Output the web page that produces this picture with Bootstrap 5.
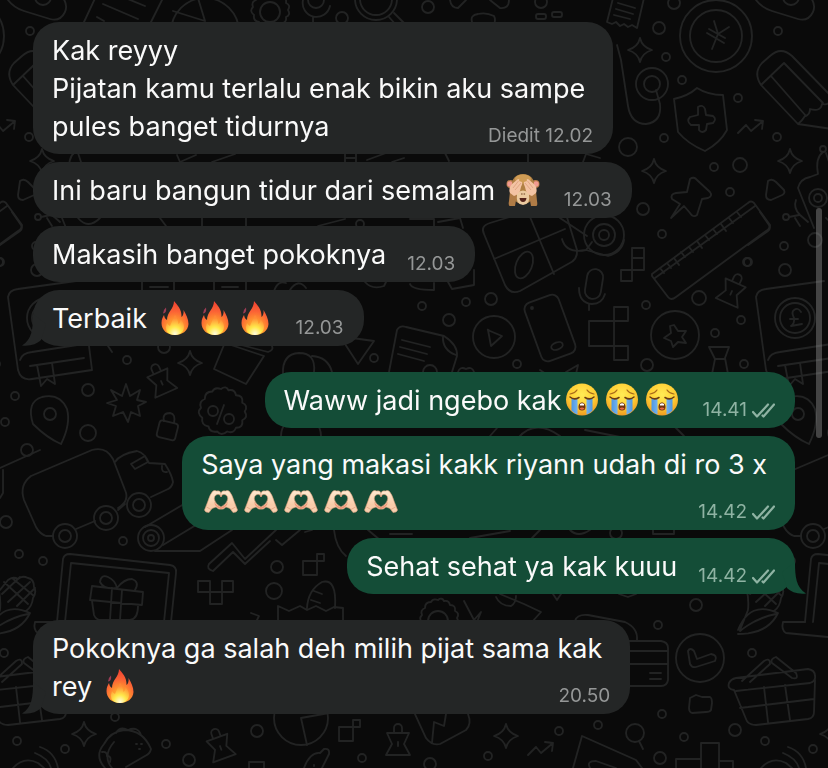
<!DOCTYPE html>
<html lang="id" data-bs-theme="dark">
<head>
<meta charset="utf-8">
<meta name="viewport" content="width=device-width, initial-scale=1">
<title>Obrolan</title>
<link href="https://cdn.jsdelivr.net/npm/bootstrap@5.3.0/dist/css/bootstrap.min.css" rel="stylesheet">
<style>
  body { background: #0a0a0a; font-family: Inter, "Noto Sans", sans-serif; }
  .wallpaper { z-index: -1; pointer-events: none; }
  .chat { padding: 22px 33px 54px; }
  .bubble { padding: 10px 20px 8px 19px; border-radius: 26px; font-size: 27px; line-height: 38px; color: #fafafa; max-width: 100%; }
  .bubble-in { background: #242626; --tail: #242626; --meta: #959797; }
  .bubble-out { background: #144d37; --tail: #144d37; --meta: #8fb3a3; }
  .new-group { margin-top: 18px; }
  .line-full { padding-right: 8px; }
  .last-line { column-gap: 21px; }
  .meta { font-size: 19px; line-height: 20px; color: var(--meta); }
  .ticks { width: 23px; height: 15px; margin-left: 5px; }
  .emo { width: 34px; height: 34px; margin: 0 3px; vertical-align: -7px; }
  .tail { width: 24px; height: 32px; fill: var(--tail); bottom: 0; }
  .tail-in { left: -11px; }
  .tail-out { right: -11px; transform: scaleX(-1); }
  .scroll-thumb { top: 208px; right: 6px; width: 6px; height: 230px; background: rgba(150,150,150,.42); }
</style>
<script src="https://cdn.jsdelivr.net/npm/bootstrap@5.3.0/dist/js/bootstrap.bundle.min.js"></script>
</head>
<body class="min-vh-100 position-relative">

<svg class="wallpaper position-fixed top-0 start-0 w-100 h-100" aria-hidden="true">
  <defs>
    <path id="spark" d="M0-12Q2-3 12 0Q2 3 0 12Q-2 3-12 0Q-2-3 0-12Z"/>
    <path id="trend" d="M-13 6L-5-2L0 4L12-6M4-7L12-6L11 2"/>
    <g id="clip"><path d="M-4-10V-14A4 4 0 0 1 4-14V-10M-11-9L11-9L6 2L12 13L-12 13L-6 2ZM0 0V4"/></g>
    <path id="cog" d="M0-20q4-3 6 1q5-1 6 4q6 0 5 6q5 2 2 7q3 5-2 7q1 6-5 6q-2 5-7 3q-5 4-8 0q-6 1-7-4q-6-1-5-7q-5-4-1-8q-2-5 3-7q0-6 6-6q2-4 7-2Z"/>
    <g id="doodles" fill="none" stroke="#222323" stroke-width="1.8" stroke-linejoin="round" stroke-linecap="round">
      <!-- top strip -->
      <path d="M8 0Q14 8 24 11L50 19Q60 22 65 12Q68 5 63-2"/><circle cx="43" cy="-3" r="8"/>
      <path d="M98-8L84 22M164-4L150 24M103 4L138 19M118-5L145 6M97 17L104 21"/>
      <circle cx="205" cy="32" r="34"/><path d="M173 11L205 21L198-2"/>
      <use href="#cog" x="269" y="12"/><circle cx="270" cy="12" r="10"/>
      <path d="M303 0A13 13 0 1 0 330 6M308 0A8 8 0 0 0 324 0M313 17V24"/>
      <circle cx="342" cy="18" r="6"/><circle cx="376" cy="-1" r="21"/><circle cx="376" cy="-1" r="16"/><path d="M389 17L396 25M394 13L404 23"/>
      <circle cx="428" cy="7" r="6"/><path d="M450 0Q451 8 458 8L466 0M490 0L500 8Q509 9 509 0M472 22Q470 15 478 14Q486 12 494 16Q496 20 494 24"/>
      <circle cx="541" cy="2" r="6"/><rect x="536" y="14" width="10" height="5" rx="2"/><rect x="552" y="12" width="10" height="5" rx="2"/>
      <path d="M613-2L607 22L612 24L616 22L620 26L624 24L628 27L632 25L637 28L644-2M618 3L635 8M616 9L633 14M614 15L630 19"/>
      <circle cx="674" cy="3" r="6"/><circle cx="659" cy="28" r="6"/><use href="#spark" x="640" y="50"/><circle cx="666" cy="57" r="4"/>
      <circle cx="716" cy="36" r="36"/><circle cx="716" cy="36" r="26"/><path d="M714 21L718 34L729 27M718 34L712 49M707 33L724 43M709 29L725 38"/>
      <circle cx="652" cy="84" r="16"/><circle cx="652" cy="84" r="8"/><path d="M617 45L621 60L628 106Q631 124 646 124Q662 122 660 104L656 90"/>
      <circle cx="682" cy="80" r="4"/><circle cx="738" cy="98" r="4"/>
      <path d="M697 88Q688 96 674 99L678 132Q688 144 705 151Q720 143 727 130L723 95Q708 95 697 88Z"/>
      <path d="M698 107Q703 104 705 109L706 115L713 116Q717 119 713 123L707 124L706 130Q702 134 699 130L699 125L691 125Q686 121 690 117L698 115Z"/>
      <use href="#trend" x="751" y="127"/><circle cx="664" cy="138" r="4"/><circle cx="628" cy="147" r="9"/>
      <use href="#spark" x="654" y="171"/><circle cx="714" cy="167" r="4"/><circle cx="740" cy="165" r="7"/><circle cx="730" cy="192" r="4"/>
      <circle cx="30" cy="31" r="4"/>
      <path d="M13 85Q5 73 14 63L22 56Q33 46 44 56L84 97M13 85L50 124L84 129M13 85L36 63M23 76L58 116M36 63L75 103M50 124Q54 121 57 116Q62 115 62 109Q73 112 74 104Q82 106 84 97"/>
      <circle cx="29" cy="137" r="4"/><use href="#spark" x="42" y="161"/><circle cx="75" cy="149" r="3"/>
      <path d="M20 181Q24 178 28 182L36 190Q38 194 32 196L23 200Q18 200 18 195Z"/>
      <circle cx="38" cy="217" r="3"/><path d="M75 152Q67 158 70 174L62 177Q52 179 50 188L66 228M48 200Q45 208 52 215L60 222M41 217L51 215"/><circle cx="70" cy="198" r="9"/><circle cx="70" cy="198" r="4"/><circle cx="67" cy="240" r="7"/><circle cx="36" cy="246" r="4"/>
      <!-- gaps between the upper bubbles -->
      <path d="M78 153L81 162M177 155L180 162L196 155M212 162L235 154M345 152V163M356 152V163M345 158H356M367 160L386 153M392 162L404 158M528 150V166M583 162L586 154L600 158M445 153L449 161"/>
      <path d="M47 218L52 226M78 218Q88 230 100 218M160 218L166 226M202 218V227H246V218M318 226L345 219M410 219H434V226M438 222L460 218L463 228"/><circle cx="360" cy="224" r="4"/>
      <path d="M142 282V291H174V282M150 287H168M214 282V291H246V282M222 287H238M274 291Q278 280 286 283M290 290Q298 278 306 288M365 282Q372 290 384 286L386 282M410 284Q412 290 434 290V283M448 282L452 289L474 285V270"/>
      <!-- pin, ruler, box and tape on the right -->
      <path d="M690 179Q694 176 697 180L710 192Q713 196 708 198L702 199L697 215Q693 218 690 213L684 206L671 218L680 204L672 199Q670 194 676 193L687 192Z"/><circle cx="643" cy="209" r="6"/>
      <path d="M652 274L748 203Q751 200 754 203L770 225Q770 229 766 231L676 297Q671 301 668 297L652 276ZM655 278L755 206M660 268l4 5M667 263l4 5M674 258l5 7M681 252l4 5M689 247l4 5M697 241l5 7M705 235l4 5M713 229l4 5M721 224l5 7M729 218l4 5M737 212l4 5"/>
      <path d="M484 234Q480 226 490 223L562 201L577 250Q578 260 568 264L520 291Q510 295 505 285ZM494 259L565 229M530 217L554 274"/><ellipse cx="524" cy="265" rx="8" ry="14" transform="rotate(22 524 265)"/>
      <circle cx="604" cy="235" r="20"/><circle cx="604" cy="235" r="11"/><circle cx="604" cy="235" r="5"/><path d="M560 218L587 236M586 250L608 256Q622 252 624 240M562 239Q566 254 586 250L592 242"/>
      <circle cx="662" cy="234" r="4"/><circle cx="747" cy="262" r="4"/>
      <path d="M632 248H644V270H621V281H632V270M632 258H644M632 248V270"/>
      <rect x="586" y="269" width="16" height="30" rx="8" transform="rotate(9 594 284)"/><path d="M579 288Q579 303 592 304Q602 304 605 294M589 304V310"/>
      <circle cx="491" cy="299" r="6"/><circle cx="466" cy="302" r="4"/><circle cx="422" cy="306" r="4"/><circle cx="449" cy="320" r="6"/>
      <circle cx="494" cy="337" r="21"/><path d="M488 330Q487 329 490 331L502 336L491 346Z"/>
      <rect x="532" y="297" width="36" height="62" rx="7" transform="rotate(-20 550 328)"/><circle cx="532" cy="308" r="1"/><ellipse cx="557" cy="346" rx="6" ry="3.500" transform="rotate(-20 557 346)"/>
      <path d="M614 307H628V321H614ZM589 321H614V346H589ZM614 346H628V360H614ZM614 321V346"/>
      <circle cx="646" cy="305" r="4"/><circle cx="699" cy="298" r="7"/><circle cx="715" cy="333" r="4"/><circle cx="741" cy="320" r="4"/><circle cx="744" cy="364" r="4"/>
      <circle cx="675" cy="335" r="24"/><path d="M674 325L678 331L686 331L682 337L686 343L678 342L673 347L671 341L664 338L671 333L670 326Z"/>
      <use href="#clip" transform="translate(732 291) rotate(24)"/><circle cx="647" cy="365" r="6"/><circle cx="517" cy="364" r="4"/>
      <path d="M709 347H729L725 358L728 374M709 347L715 359L712 374M715 359H725"/>
      <!-- book and stickers on the left -->
      <path d="M8 297Q9 290 18 289L76 281M8 297L18 370Q21 381 32 379L92 370L89 346M20 360Q22 353 32 352L90 343M30 366L84 358M37 365L41 386L47 379L55 384L52 363"/>
      <circle cx="47" cy="318" r="20"/><circle cx="47" cy="318" r="15"/><path d="M53 312Q50 307 46 310Q43 312 46 318Q47 323 43 326L54 324M42 319H50"/>
      <circle cx="37" cy="270" r="6"/><circle cx="0" cy="262" r="4"/><path d="M0 245L20 231Q23 229 21 225L12 212"/>
      <path d="M108 346L112 352"/><circle cx="164" cy="347" r="6"/><circle cx="127" cy="360" r="4"/><use href="#spark" x="190" y="363"/>
      <path d="M226 340L214 369L246 384L264 356L216 340M222 340L268 352Q274 350 272 346"/><path d="M345 344L358 364L374 341L352 338"/><circle cx="374" cy="358" r="4"/>
      <path d="M283 374Q282 354 299 353Q316 353 314 372M312 356Q328 357 332 372"/>
      <path d="M389 372L397 330Q400 325 406 327L444 336Q458 345 457 356L452 372M443 336Q442 350 456 355M402 340L430 347M400 347L427 354M398 354L424 361"/><circle cx="430" cy="372" r="7"/>
      <path d="M458 372Q460 366 466 369Q472 366 474 372M540 370L546 374M566 372L578 365L576 374"/>
      <use href="#clip" transform="translate(161 381) rotate(-24)"/>
      <path d="M126 384L130 396L140 390L137 400L146 402L138 406L140 416L131 412L128 422L123 412L113 416L116 406L107 403L117 400L111 390L122 396Z"/>
      <circle cx="88" cy="390" r="6"/><circle cx="15" cy="396" r="4"/><circle cx="5" cy="422" r="4"/><circle cx="50" cy="414" r="6"/><circle cx="88" cy="433" r="8"/><circle cx="27" cy="450" r="6"/>
      <path d="M33 424Q26 402 42 397Q60 393 67 409Q71 424 61 444Q47 438 33 424Z"/>
      <rect x="158" y="422" width="19" height="17" rx="3" transform="rotate(14 168 430)"/><path d="M164 421Q162 413 170 413Q176 414 174 423"/>
      <use href="#cog" transform="translate(221 414) scale(1.250)" stroke-width="1.500"/><circle cx="213" cy="411" r="5"/><circle cx="229" cy="419" r="5"/><path d="M224 405L217 424"/>
      <circle cx="301" cy="436" r="20"/><path d="M490 436L497 428M518 438Q535 418 560 436M585 430L620 437M674 426L684 436"/>
      <!-- van and roll -->
      <path d="M53 536L46 536Q40 534 36 527L24 500Q19 485 31 476L92 450Q106 446 113 459L125 490Q130 501 118 508M76 529L95 521M118 510L125 504M115 462Q120 454 137 451Q145 453 149 463L165 464Q172 475 173 482Q172 488 166 490L151 497M131 464L145 456L148 462L135 469ZM162 466Q161 473 167 472"/>
      <circle cx="65" cy="536" r="12"/><circle cx="65" cy="536" r="6"/><circle cx="106" cy="518" r="12"/><circle cx="106" cy="518" r="6"/><circle cx="139" cy="505" r="12"/><circle cx="139" cy="505" r="6"/>
      <circle cx="151" cy="538" r="13"/><circle cx="151" cy="538" r="8"/><circle cx="151" cy="538" r="3"/><path d="M145 527L184 504M155 551H200L232 530M163 545L196 525"/>
      <circle cx="6" cy="522" r="6"/><circle cx="123" cy="541" r="4"/><circle cx="19" cy="554" r="4"/><circle cx="43" cy="561" r="4"/><path d="M0 468L40 450M0 498L3 493V470"/>
      <path d="M209 564L232 543L245 559L276 530M213 571L233 552L245 564L270 541M209 564Q206 569 213 571M276 540L282 545L300 530M305 532L312 530M334 530Q336 548 346 556M368 530L380 540M390 534H412M470 538L510 531M532 538L540 530M570 530Q578 538 590 530M653 530V534H674V530"/>
      <circle cx="616" cy="533" r="6"/><circle cx="277" cy="567" r="6"/><circle cx="274" cy="591" r="8"/>
      <!-- monitor with gift -->
      <path d="M57 622L63 559Q64 554 70 554L170 565Q177 566 176 573L171 622M65 622L71 563L169 573L164 622"/>
      <path d="M92 586L143 592L142 605L90 600ZM92 601L94 615Q96 620 101 620L130 620Q138 619 138 606M112 588L110 620M122 590L120 620M117 588Q104 590 100 582Q101 574 108 577Q115 580 117 588Q124 579 132 579Q140 582 135 590"/>
      <path d="M198 581H210V592H222V581H233V592H222V604H210V592H198ZM303 561H317V575H303ZM317 554H324V561H317Z"/>
      <path d="M278 622V606L289 611L300 606L307 610L316 606L326 611L334 607L343 608V622M307 608Q308 590 322 582Q337 578 335 608M314 591L322 594M311 600L320 603M251 613L259 616L256 622"/>
      <!-- corn -->
      <path d="M0 590L8 580Q13 576 18 579Q22 575 28 578Q34 579 34 587Q37 592 33 598Q32 607 26 611M4 582L28 604M12 578L34 596M2 594L20 577M8 602L30 582M17 606L35 588M-8 576Q2 590 0 610L-8 630M-10 630Q2 600 30 613Q20 634-10 634M-8 631Q8 618 28 614"/>
      <!-- lower right items -->
      <circle cx="696" cy="605" r="6"/><circle cx="658" cy="625" r="4"/><circle cx="4" cy="653" r="4"/>
      <use href="#cog" x="438" y="620"/><circle cx="438" cy="621" r="10"/>
      <path d="M464 601L474 620L481 612L477 622M500 594L524 604L541 612L532 622M496 597Q500 606 511 606Q516 603 516 596M553 594L557 600L561 594M575 621Q577 614 588 615L625 622Q638 628 637 640M619 594L628 597L636 594"/>
      <path d="M620 641H661Q668 642 668 648V680Q667 686 661 686H630M630 651H668M630 664H668M650 673H661M650 679H661"/>
      <circle cx="700" cy="658" r="24"/><path d="M688 651Q690 647 694 651L697 659L711 654Q718 655 715 661L696 667Q692 668 690 664Z"/>
      <path d="M690 698L696 695L702 697L710 697Q712 698 712 703L711 710Q710 712 706 712L692 713Q689 712 689 708Z"/><circle cx="662" cy="714" r="4"/>
      <path d="M57 622L35 622Q33 630 38 633L90 638"/>
      <!-- basket -->
      <path d="M-14 690Q-21 689-19 683Q-17 679-12 678L60 669Q67 670 67 676Q68 681 62 683L-12 691M-14 690L-2 719Q0 725 8 725L60 719Q66 718 66 712L67 680M-8 708L66 699M16 687L20 722M37 685L42 720M-6 681L16 661Q22 657 22 664L2 682M28 657Q22 659 24 663L44 678Q51 680 48 673Z"/>
      <circle cx="115" cy="717" r="4"/><use href="#spark" x="84" y="734"/><circle cx="17" cy="741" r="4"/><circle cx="65" cy="749" r="4"/>
      <path d="M13 768Q24 756 38 763L44 768M35 753Q48 758 51 768M40 747Q55 752 58 768"/>
      <path d="M105 768Q94 756 104 744Q110 732 124 730Q143 730 151 749Q150 754 145 756L126 767M112 768Q102 756 114 742M116 733Q120 726 128 730Q138 726 141 735"/><path d="M102 752q5-1 5 4q5 0 3 6M136 744h1M141 744h1M139 749h1"/>
      <circle cx="166" cy="744" r="4"/><circle cx="189" cy="760" r="6"/><use href="#clip" transform="translate(220 746) rotate(-20)"/>
      <circle cx="257" cy="731" r="6"/><circle cx="301" cy="718" r="27"/><path d="M301 718L329 713M301 718L307 745M249 768V762H264V768"/>
      <path d="M339 727H353V741H339ZM353 720H360V727H353ZM304 768Q310 752 320 753L324 749Q330 748 329 754L322 768M314 765v1"/><circle cx="362" cy="758" r="4"/><use href="#clip" x="398" y="742"/>
      <path d="M415 714L426 738Q432 746 440 744L466 730Q472 724 468 714M432 743L434 722L444 726L446 714"/>
      <use href="#spark" x="506" y="736"/><circle cx="488" cy="756" r="4"/><circle cx="430" cy="764" r="6"/><use href="#trend" x="541" y="749"/><circle cx="559" cy="731" r="4"/><circle cx="598" cy="725" r="4"/>
      <path d="M573 768L582 736L636 760L642 768M590 768Q586 761 596 761L616 768"/><circle cx="635" cy="733" r="9"/><path d="M639 741L643 749"/><circle cx="660" cy="758" r="6"/><circle cx="684" cy="737" r="4"/><circle cx="735" cy="730" r="6"/>
      <path d="M676 768V759H701V743H719V761H733V768M701 759V768M719 761V768"/>
    </g>
    <pattern id="tile" width="748" height="768" patternUnits="userSpaceOnUse">
      <use href="#doodles"/><use href="#doodles" x="748"/><use href="#doodles" x="-748"/>
    </pattern>

    <radialGradient id="fireOuter" cx=".5" cy=".88" r=".88"><stop offset="0" stop-color="#ffc642"/><stop offset=".35" stop-color="#ff9a2e"/><stop offset=".65" stop-color="#fb6335"/><stop offset="1" stop-color="#ee3f32"/></radialGradient>
    <radialGradient id="fireInner" cx=".5" cy=".95" r=".8"><stop offset="0" stop-color="#fffce0"/><stop offset=".45" stop-color="#ffe84a"/><stop offset="1" stop-color="#ff8a36"/></radialGradient>
    <symbol id="fire" viewBox="0 0 34 34">
      <path d="M16 0C19 4 24 8 23.500 16C25 15 26 12 25.500 9C28 13 30.500 18 30.500 23C30 30 24 34 17 34C9 34 3.500 29 3.500 22C3.500 18 5 16 6 14C6.500 16 7 18 9 19C9 11 16 8 16 0Z" fill="url(#fireOuter)"/>
      <path d="M17 14C20 18 20 21 20.500 23C22 22 22.500 20 22.500 18C26 22 27 26 25 30Q22 34 17 34Q11 34 8.500 30Q7 26 9 22Q10 24 12 25Q14 20 17 14Z" fill="url(#fireInner)"/>
      <path d="M8 6.500Q5 9 5 12.500Q9 12 8 6.500Z" fill="#9c3c55"/>
    </symbol>

    <radialGradient id="face" cx=".5" cy=".35" r=".65"><stop offset="0" stop-color="#ffec55"/><stop offset=".6" stop-color="#ffcf35"/><stop offset="1" stop-color="#ee9a22"/></radialGradient>
    <linearGradient id="tears"><stop offset="0" stop-color="#4f97e2"/><stop offset=".5" stop-color="#8ec8f8"/><stop offset="1" stop-color="#4f97e2"/></linearGradient>
    <symbol id="sob" viewBox="0 0 34 34">
      <circle cx="17" cy="16.500" r="16" fill="url(#face)"/>
      <path d="M6.500 15H12.500V31.500Q8.500 30 6.500 27.500ZM21.500 15H27.500V27.500Q25.500 30 21.500 31.500Z" fill="url(#tears)"/>
      <path d="M5 14Q9 17.500 14 14.500M20 14.500Q25 17.500 29 14" fill="none" stroke="#6b3b10" stroke-width="1.500" stroke-linecap="round"/>
      <path d="M5 11Q9.500 10.500 12 7M22 7Q24.500 10.500 29 11" fill="none" stroke="#a8691a" stroke-width="1.200" stroke-linecap="round"/>
      <path d="M17 19.500C19.500 19.500 20.500 22 20.500 24Q20.500 27.500 17 27.500Q13.500 27.500 13.500 24C13.500 22 14.500 19.500 17 19.500Z" fill="#6f3410"/>
      <path d="M15 21Q17 19.500 19 21V22.500H15Z" fill="#fff"/><path d="M14.500 25.500Q17 23.500 19.500 25.500Q17 28 14.500 25.500Z" fill="#e86a46"/>
    </symbol>

    <symbol id="monkey" viewBox="0 0 34 34">
      <circle cx="4.500" cy="11" r="4" fill="#b77c4a"/><circle cx="29.500" cy="11" r="4" fill="#b77c4a"/><circle cx="4" cy="11" r="2.700" fill="#f19b91"/><circle cx="30" cy="11" r="2.700" fill="#f19b91"/>
      <path d="M17 1C24 1 29 6 28 14L26 25Q24 31 17 31Q10 31 8 25L6 14C5 6 10 1 17 1Z" fill="#b08044"/>
      <ellipse cx="17" cy="6" rx="8" ry="4.500" fill="#cf9c55"/>
      <path d="M11 20Q17 15 23 20Q25 31 17 32Q9 31 11 20Z" fill="#ebcaa0"/>
      <path d="M4 18L11 22L9 33H4Q2 33 3 28ZM30 18L23 22L25 33H30Q32 33 31 28Z" fill="#b07c46"/>
      <path d="M4 20Q2 15 6 11L12 6Q14 6 13 8L16 9Q17 11 15 14L14 18Q12 22 8 23ZM30 20Q32 15 28 11L22 6Q20 6 21 8L18 9Q17 11 19 14L20 18Q22 22 26 23Z" fill="#f3c3a3"/>
      <path d="M7 15L12.500 8M9 17L15 10M27 15L21.500 8M25 17L19 10" stroke="#d99877" stroke-width=".7" fill="none"/>
      <path d="M15.500 21H16.200M18 21H18.700" stroke="#6c4020" stroke-linecap="round"/><path d="M13.500 25H20.500Q20 29 17 29Q14 29 13.500 25Z" fill="#54231a"/>
    </symbol>

    <linearGradient id="skin" x2="0" y2="1"><stop offset="0" stop-color="#ffead0"/><stop offset=".65" stop-color="#f8cba8"/><stop offset="1" stop-color="#f7d1b2"/></linearGradient>
    <symbol id="hands" viewBox="0 0 34 34">
      <g id="hand"><path d="M.500 25L4 16Q6 9 9 6Q11 5 12.500 6Q16 5 17 8V12Q16 8.500 13 9.500Q9.500 11 10.500 15Q11.500 19 17 22V24Q15 25 12 22L8 23.500L5 27.500Q1 27.500 .500 25Z" fill="url(#skin)" stroke="#d99c79" stroke-width=".6"/><path d="M10 16Q11.500 20 17 22.500V24Q13 23 11 20Z" fill="#ee9376"/><path d="M2.500 22L7 24.500" stroke="#e0a17f" stroke-width=".8"/></g>
      <use href="#hand" transform="translate(34 0) scale(-1 1)"/>
    </symbol>
    <symbol id="readTicks" viewBox="0 0 23 15"><path d="M1 9L5 13.500L16 1.500M10.500 12.500L11.500 13.500L22 1.500" fill="none" stroke="#8fb3a3" stroke-width="2.200" stroke-linecap="round" stroke-linejoin="round"/></symbol>
    <symbol id="tailShape" viewBox="0 0 24 32"><path d="M11 0C11 15 10 25 0 31.500C8 32.500 15 30 19 26L24 10Z"/></symbol>
  </defs>
  <rect width="100%" height="100%" fill="url(#tile)"/>
</svg>

<main class="chat d-flex flex-column align-items-start gap-2">
  <article class="bubble bubble-in">
    <div class="line-full">Kak reyyy<br>Pijatan kamu terlalu enak bikin aku sampe</div>
    <div class="last-line d-flex justify-content-between align-items-end"><span>pules banget tidurnya</span><small class="meta">Diedit <time>12.02</time></small></div>
  </article>

  <article class="bubble bubble-in last-line d-flex align-items-end">
    <span>Ini baru bangun tidur dari semalam <svg class="emo" role="img" aria-label="🙈"><use href="#monkey"/></svg></span><time class="meta">12.03</time>
  </article>

  <article class="bubble bubble-in last-line d-flex align-items-end">
    <span>Makasih banget pokoknya</span><time class="meta">12.03</time>
  </article>

  <article class="bubble bubble-in last-line d-flex align-items-end position-relative">
    <svg class="tail tail-in position-absolute" aria-hidden="true"><use href="#tailShape"/></svg>
    <span>Terbaik <svg class="emo" role="img" aria-label="🔥"><use href="#fire"/></svg><svg class="emo" role="img" aria-label="🔥"><use href="#fire"/></svg><svg class="emo" role="img" aria-label="🔥"><use href="#fire"/></svg></span><time class="meta">12.03</time>
  </article>

  <article class="bubble bubble-out new-group align-self-end last-line d-flex align-items-end">
    <span>Waww jadi ngebo kak<svg class="emo" role="img" aria-label="😭"><use href="#sob"/></svg><svg class="emo" role="img" aria-label="😭"><use href="#sob"/></svg><svg class="emo" role="img" aria-label="😭"><use href="#sob"/></svg></span>
    <span class="meta d-flex align-items-center"><time>14.41</time><svg class="ticks" role="img" aria-label="Dibaca"><use href="#readTicks"/></svg></span>
  </article>

  <article class="bubble bubble-out align-self-end">
    <div class="line-full">Saya yang makasi kakk riyann udah di ro 3 x</div>
    <div class="last-line d-flex justify-content-between align-items-end">
      <span><svg class="emo" role="img" aria-label="🫶🏻"><use href="#hands"/></svg><svg class="emo" role="img" aria-label="🫶🏻"><use href="#hands"/></svg><svg class="emo" role="img" aria-label="🫶🏻"><use href="#hands"/></svg><svg class="emo" role="img" aria-label="🫶🏻"><use href="#hands"/></svg><svg class="emo" role="img" aria-label="🫶🏻"><use href="#hands"/></svg></span>
      <span class="meta d-flex align-items-center"><time>14.42</time><svg class="ticks" role="img" aria-label="Dibaca"><use href="#readTicks"/></svg></span>
    </div>
  </article>

  <article class="bubble bubble-out align-self-end last-line d-flex align-items-end position-relative">
    <svg class="tail tail-out position-absolute" aria-hidden="true"><use href="#tailShape"/></svg>
    <span>Sehat sehat ya kak kuuu</span>
    <span class="meta d-flex align-items-center"><time>14.42</time><svg class="ticks" role="img" aria-label="Dibaca"><use href="#readTicks"/></svg></span>
  </article>

  <article class="bubble bubble-in new-group position-relative">
    <svg class="tail tail-in position-absolute" aria-hidden="true"><use href="#tailShape"/></svg>
    <div class="line-full">Pokoknya ga salah deh milih pijat sama kak</div>
    <div class="last-line d-flex justify-content-between align-items-end"><span>rey <svg class="emo" role="img" aria-label="🔥"><use href="#fire"/></svg></span><time class="meta">20.50</time></div>
  </article>
</main>

<div class="scroll-thumb position-absolute rounded-pill" aria-hidden="true"></div>
</body>
</html>
